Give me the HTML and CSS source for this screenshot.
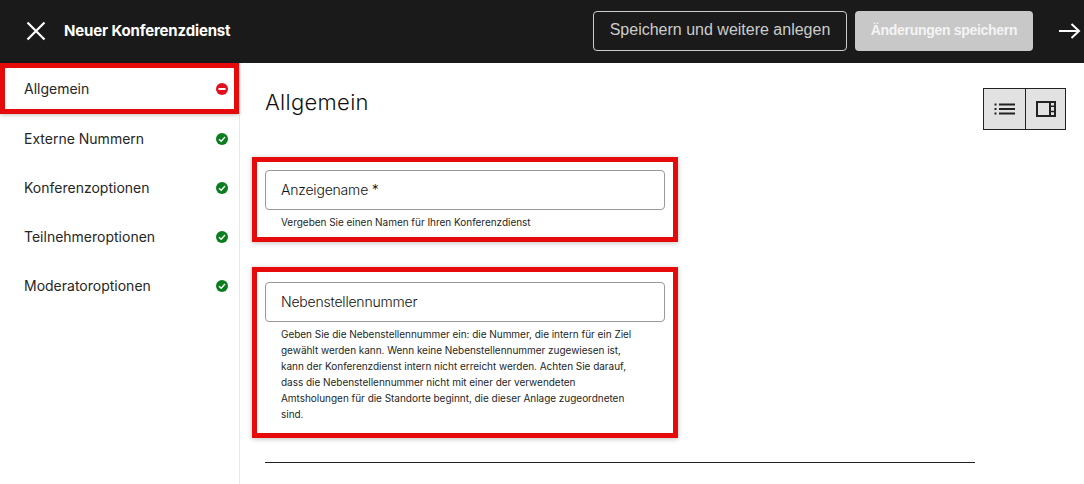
FILE: index.html
```html
<!DOCTYPE html>
<html lang="de">
<head>
<meta charset="utf-8">
<title>Neuer Konferenzdienst</title>
<link rel="stylesheet" href="styles.css">
</head>
<body>
<header class="topbar">
  <button class="icon-btn close" aria-label="Schließen">
    <svg width="22" height="22" viewBox="0 0 22 22"><path d="M2.500 2.500 L19.500 19.500 M19.500 2.500 L2.500 19.500" stroke="#fff" stroke-width="2.200" fill="none"/></svg>
  </button>
  <h1 class="topbar-title">Neuer Konferenzdienst</h1>
  <div class="topbar-actions">
    <button class="btn btn-outline">Speichern und weitere anlegen</button>
    <button class="btn btn-disabled">Änderungen speichern</button>
    <svg class="next" width="22" height="18" viewBox="0 0 22 18"><path d="M0 9 H20 M12.500 2 L20 9 L12.500 16" stroke="#fff" stroke-width="2" fill="none"/></svg>
  </div>
</header>
<div class="main">
  <nav class="sidebar">
    <a class="nav-item nav-error">Allgemein
      <svg class="status" width="12" height="12" viewBox="0 0 12 12"><circle cx="6" cy="6" r="6" fill="#e20f1f"/><rect x="2.500" y="5" width="7" height="2" fill="#fff"/></svg>
    </a>
    <a class="nav-item">Externe Nummern
      <svg class="status" width="12" height="12" viewBox="0 0 12 12"><circle cx="6" cy="6" r="6" fill="#0a7d1e"/><path d="M3 6.200 L5.200 8.200 L9 4" stroke="#fff" stroke-width="1.400" fill="none"/></svg>
    </a>
    <a class="nav-item">Konferenzoptionen
      <svg class="status" width="12" height="12" viewBox="0 0 12 12"><circle cx="6" cy="6" r="6" fill="#0a7d1e"/><path d="M3 6.200 L5.200 8.200 L9 4" stroke="#fff" stroke-width="1.400" fill="none"/></svg>
    </a>
    <a class="nav-item">Teilnehmeroptionen
      <svg class="status" width="12" height="12" viewBox="0 0 12 12"><circle cx="6" cy="6" r="6" fill="#0a7d1e"/><path d="M3 6.200 L5.200 8.200 L9 4" stroke="#fff" stroke-width="1.400" fill="none"/></svg>
    </a>
    <a class="nav-item">Moderatoroptionen
      <svg class="status" width="12" height="12" viewBox="0 0 12 12"><circle cx="6" cy="6" r="6" fill="#0a7d1e"/><path d="M3 6.200 L5.200 8.200 L9 4" stroke="#fff" stroke-width="1.400" fill="none"/></svg>
    </a>
  </nav>
  <main class="content">
    <div class="form-col">
      <h2 class="page-title">Allgemein</h2>
      <section class="field-box field-first">
        <div class="input">Anzeigename *</div>
        <p class="help">Vergeben Sie einen Namen für Ihren Konferenzdienst</p>
      </section>
      <section class="field-box field-second">
        <div class="input">Nebenstellennummer</div>
        <p class="help help-long">Geben Sie die Nebenstellennummer ein: die Nummer, die intern für ein Ziel<br>gewählt werden kann. Wenn keine Nebenstellennummer zugewiesen ist,<br>kann der Konferenzdienst intern nicht erreicht werden. Achten Sie darauf,<br>dass die Nebenstellennummer nicht mit einer der verwendeten<br>Amtsholungen für die Standorte beginnt, die dieser Anlage zugeordneten<br>sind.</p>
      </section>
      <hr class="divider">
    </div>
    <div class="view-toggle">
      <button class="toggle-btn" aria-label="Listenansicht">
        <svg width="22" height="14" viewBox="0 0 22 14"><path d="M5 2.500 H21 M5 7 H21 M5 11.500 H21" stroke="#222" stroke-width="2"/><path d="M0.500 2.500 H2.500 M0.500 7 H2.500 M0.500 11.500 H2.500" stroke="#222" stroke-width="2"/></svg>
      </button>
      <button class="toggle-btn" aria-label="Seitenansicht">
        <svg width="20" height="16" viewBox="0 0 20 16"><rect x="1" y="1" width="18" height="14" fill="none" stroke="#222" stroke-width="2"/><path d="M14 1 V15" stroke="#222" stroke-width="2"/><path d="M14 5.300 H19 M14 10.600 H19" stroke="#222" stroke-width="1.500"/></svg>
      </button>
    </div>
  </main>
</div>
</body>
</html>
```
FILE: styles.css
```css
* { box-sizing: border-box; }
html, body { margin: 0; height: 100%; overflow: hidden; }
body { font-family: "Inter", "Liberation Sans", sans-serif; color: #262626; background: #fff; width: 1084px; height: 484px; }

.topbar { height: 63px; background: #1a1a1a; display: flex; align-items: center; padding: 0 0 1px 25px; color: #fff; }
.icon-btn { background: none; border: 0; padding: 0; width: 22px; height: 22px; display: block; }
.topbar-title { margin: 0 0 0 17px; font-size: 15px; line-height: 20px; font-weight: 700; letter-spacing: -0.15px; }
.topbar-actions { margin-left: auto; display: flex; align-items: center; }
.btn { height: 40px; border-radius: 4px; font-family: "Liberation Sans", sans-serif; font-size: 16px; padding: 0 0 2px; }
.btn-outline { width: 254px; background: transparent; border: 1px solid #ccc; color: #ccc; }
.btn-disabled { width: 178px; margin-left: 8px; background: #c8c8c8; border: 0; color: #f4f4f4; font-weight: 700; font-size: 14px; letter-spacing: -0.3px; }
.next { margin-left: 26px; margin-right: 3px; }

.main { display: flex; height: 421px; }
.sidebar { width: 240px; border-right: 1px solid #e8e8e8; display: flex; flex-direction: column; flex: none; }
.nav-item { height: 49px; padding: 0 11px 0 24px; display: flex; align-items: center; justify-content: space-between; font-size: 14px; color: #262626; }
.nav-error { height: 51px; border: 5px solid #e60a0a; padding: 0 6px 0 19px; box-shadow: 0 1px 4px rgba(0,0,0,.25); }

.content { flex: 1; display: flex; padding-left: 25px; }
.form-col { width: 710px; }
.page-title { margin: 0; height: 94px; padding-top: 25px; font-size: 22px; line-height: 28px; font-weight: 300; letter-spacing: 0.3px; color: #111; }
.field-box { width: 426px; margin-left: -13px; border: 5px solid #e60a0a; padding: 8px 8px 0; box-shadow: 0 1px 5px rgba(0,0,0,.25); }
.field-first { height: 85px; }
.field-second { height: 171px; margin-top: 25px; padding-top: 10px; }
.input { height: 40px; border: 1px solid #999; border-radius: 4px; padding: 0 0 2px 15px; display: flex; align-items: center; font-size: 14px; font-weight: 300; letter-spacing: -0.2px; color: #111; }
.help { margin: 4px 0 0; padding-left: 16px; font-size: 10px; line-height: 16px; letter-spacing: -0.03px; color: #262626; }
.help-long { margin-top: 4px; }
.divider { margin: 24px 0 0; border: 0; border-top: 1px solid #222; }

.view-toggle { display: flex; margin: 25px 0 0 8px; height: 42px; border: 1px solid #222; align-self: flex-start; }
.toggle-btn { width: 41px; height: 40px; background: #e2e2e2; border: 0; padding: 0; display: flex; align-items: center; justify-content: center; }
.toggle-btn + .toggle-btn { width: 40px; border-left: 1px solid #222; }
```
